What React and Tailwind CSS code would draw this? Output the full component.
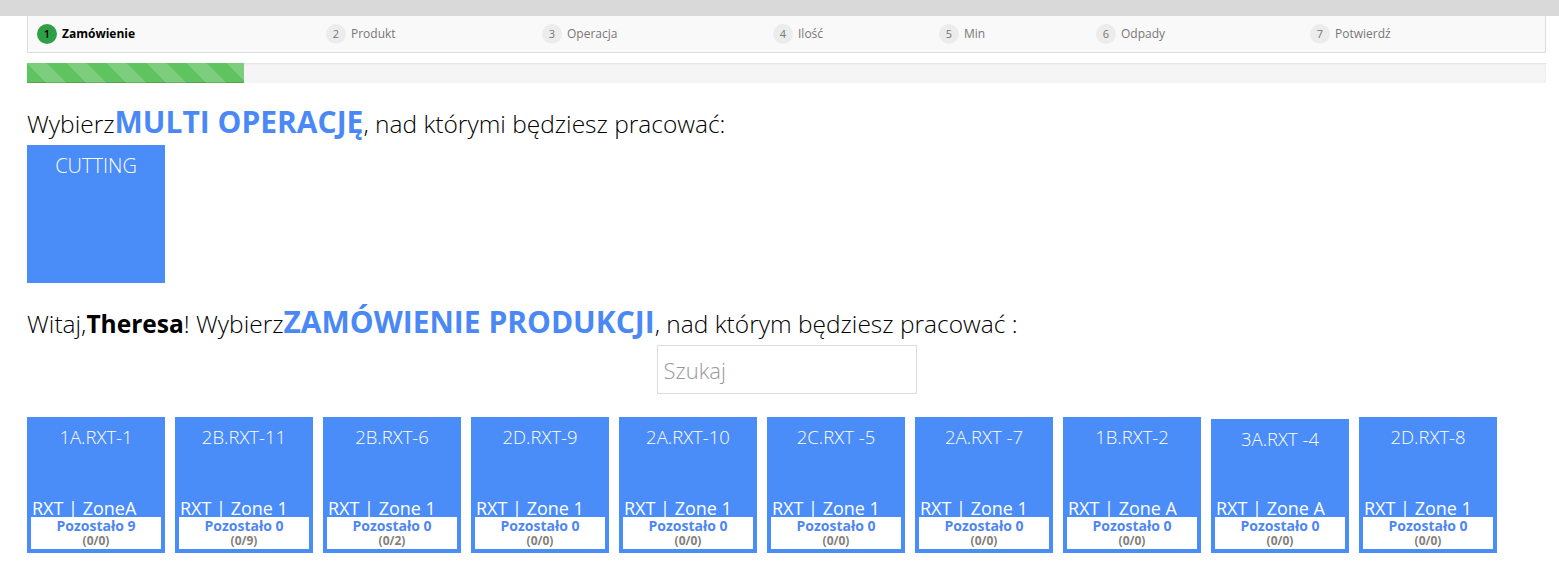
import React from "react";

const steps = [
  { no: 1, label: "Zamówienie", w: "w-[289px]", active: true },
  { no: 2, label: "Produkt", w: "w-[216px]" },
  { no: 3, label: "Operacja", w: "w-[231px]" },
  { no: 4, label: "Ilość", w: "w-[166px]" },
  { no: 5, label: "Min", w: "w-[157px]" },
  { no: 6, label: "Odpady", w: "w-[214px]" },
  { no: 7, label: "Potwierdź", w: "flex-1" },
];

const orders = [
  { name: "1A.RXT-1", zone: "RXT | ZoneA", left: 9, done: "(0/0)" },
  { name: "2B.RXT-11", zone: "RXT | Zone 1", left: 0, done: "(0/9)" },
  { name: "2B.RXT-6", zone: "RXT | Zone 1", left: 0, done: "(0/2)" },
  { name: "2D.RXT-9", zone: "RXT | Zone 1", left: 0, done: "(0/0)" },
  { name: "2A.RXT-10", zone: "RXT | Zone 1", left: 0, done: "(0/0)" },
  { name: "2C.RXT -5", zone: "RXT | Zone 1", left: 0, done: "(0/0)" },
  { name: "2A.RXT -7", zone: "RXT | Zone 1", left: 0, done: "(0/0)" },
  { name: "1B.RXT-2", zone: "RXT | Zone A", left: 0, done: "(0/0)" },
  { name: "3A.RXT -4", zone: "RXT | Zone A", left: 0, done: "(0/0)", short: true },
  { name: "2D.RXT-8", zone: "RXT | Zone 1", left: 0, done: "(0/0)" },
];

const App = () => {
  return (
    <div className="min-h-screen bg-white font-['Open_Sans',sans-serif]">
      {/* top strip */}
      <div className="h-[16px] bg-[#d9d9d9]" />

      <div className="ml-[27px] w-[1519px]">
        {/* Stepper */}
        <div className="flex items-center h-[37px] pl-[9px] bg-[#f9f9f9] border-x border-b border-[#dddddd]">
          {steps.map((s) => (
            <div key={s.no} className={`${s.w} flex items-center gap-[5px]`}>
              <span
                className={
                  s.active
                    ? "w-[20px] h-[20px] rounded-full bg-[#2e9e47] text-black text-[11px] font-semibold flex items-center justify-center"
                    : "w-[20px] h-[20px] rounded-full bg-[#ececec] text-[#777] text-[11px] flex items-center justify-center"
                }
              >
                {s.no}
              </span>
              <span
                className={
                  s.active
                    ? "text-[12px] font-bold text-black"
                    : "text-[12px] text-[#777]"
                }
              >
                {s.label}
              </span>
            </div>
          ))}
        </div>

        {/* Progress */}
        <div className="mt-[10px] h-[20px] bg-[#f5f5f5] shadow-[inset_0_1px_2px_rgba(0,0,0,0.08)]">
          <div className="h-full w-[217px] bg-[#5fc35f] bg-[linear-gradient(45deg,rgba(255,255,255,.18)_25%,transparent_25%,transparent_50%,rgba(255,255,255,.18)_50%,rgba(255,255,255,.18)_75%,transparent_75%,transparent)] bg-[length:40px_40px] shadow-[inset_0_-1px_0_rgba(0,0,0,0.15)]" />
        </div>

        {/* Multi operations */}
        <div className="mt-[18px] text-[24.5px] font-light leading-[42px] text-black">
          Wybierz
          <span className="text-[30px] font-bold text-[#4a89f5]">MULTI OPERACJĘ</span>
          , nad którymi będziesz pracować:
        </div>
        <div className="w-[138px] h-[138px] bg-[#4a8cf8] text-white text-[20px] font-light text-center pt-[6px]">
          CUTTING
        </div>

        {/* Orders */}
        <div className="mt-[18px] text-[24.5px] font-light leading-[42px] text-black">
          Witaj,<span className="font-bold">Theresa</span>! Wybierz
          <span className="text-[30px] font-bold text-[#4a89f5]">ZAMÓWIENIE PRODUKCJI</span>
          , nad którym będziesz pracować :
        </div>
        <div className="flex justify-center">
          <input
            type="text"
            placeholder="Szukaj"
            className="w-[260px] h-[49px] border border-[#dddddd] px-[6px] text-[22px] font-light placeholder:text-[#999] outline-none"
          />
        </div>

        <div className="mt-[23px] flex items-end gap-[10px]">
          {orders.map((o) => (
            <div
              key={o.name}
              className={`${o.short ? "h-[134px]" : "h-[136px]"} w-[138px] bg-[#4a8cf8] flex flex-col`}
            >
              <div className="pt-[8px] text-center text-white text-[18.5px] font-light leading-[24px]">
                {o.name}
              </div>
              <div className="flex-1" />
              <div className="px-[5px] text-white text-[18px] leading-[18px] whitespace-nowrap">
                {o.zone}
              </div>
              <div className="mx-[4px] mb-[4px] h-[32px] bg-white flex flex-col items-center justify-center">
                <span className="text-[14px] font-bold leading-[16px] text-[#4f86ef]">
                  Pozostało {o.left}
                </span>
                <span className="text-[12px] font-bold leading-[14px] text-[#857f78]">
                  {o.done}
                </span>
              </div>
            </div>
          ))}
        </div>
      </div>
    </div>
  );
};

export default App;
